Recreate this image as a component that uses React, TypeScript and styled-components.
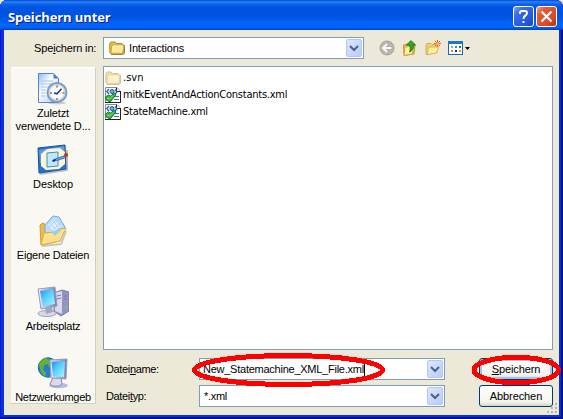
import React from 'react';
import styled, { createGlobalStyle } from 'styled-components';

const GlobalStyle = createGlobalStyle`
  * { box-sizing: border-box; }
  body { margin: 0; overflow: hidden; background: #ece9d8; }
  svg { display: block; flex: none; }
  u { text-underline-offset: 1px; text-decoration-thickness: 1px; text-decoration-skip-ink: none; }
`;

const Window = styled.div`
  position: relative;
  width: 563px;
  height: 419px;
  display: flex;
  flex-direction: column;
  overflow: hidden;
  border-radius: 7px 7px 0 0;
  background: #0831d9;
  box-shadow: inset 1px 0 #0019cf, inset -2px 0 #00138c, inset 0 -2px #00138c;
  font: 11px/13px "Liberation Sans", Arial, sans-serif;
  color: #000;
`;

const TitleBar = styled.header`
  height: 30px;
  flex: none;
  display: flex;
  align-items: center;
  gap: 2px;
  padding: 3px 6px 0 8px;
  border-radius: 7px 7px 0 0;
  background: linear-gradient(#0844c8 0, #2a82f8 6%, #0a67ee 13%, #0053e1 25%, #0054e3 55%, #0063fb 78%, #0066ff 88%, #0056e6 95%, #003cc4 100%);
`;

const Title = styled.h1`
  flex: 1;
  margin: 0;
  font: bold 13px/16px "Open Sans", "Noto Sans", sans-serif;
  letter-spacing: -0.1px;
  color: #fff;
  text-shadow: 1px 1px #0a1883;
`;

const CaptionButton = styled.button<{ $danger?: boolean }>`
  width: 21px;
  height: 21px;
  padding: 0;
  display: grid;
  place-items: center;
  border: 1px solid #fff;
  border-radius: 3px;
  background: ${p => p.$danger
    ? 'linear-gradient(135deg, #f0a08a 0, #e4583a 25%, #da4a25 70%, #b83010 100%)'
    : 'linear-gradient(135deg, #84a7f7 0, #3d6cec 25%, #2358de 70%, #1a48c4 100%)'};
`;

const Client = styled.main`
  flex: 1;
  min-height: 0;
  margin: 0 4px 4px;
  padding: 7px 6px 0 7px;
  background: #ece9d8;
  display: flex;
  flex-direction: column;
  gap: 7px;
`;

const Toolbar = styled.div`
  height: 22px;
  flex: none;
  display: flex;
  align-items: center;
`;

const LookInLabel = styled.label`
  width: 92px;
  padding-left: 23px;
  white-space: nowrap;
  letter-spacing: -0.15px;
`;

const Combo = styled.div<{ $width: number; $left?: number }>`
  width: ${p => p.$width}px;
  height: 22px;
  display: flex;
  align-items: center;
  gap: 4px;
  padding: 0 1px 0 ${p => p.$left ?? 4}px;
  border: 1px solid #7f9db9;
  background: #fff;
`;

const DropButton = styled.button`
  width: 16px;
  height: 18px;
  margin-left: auto;
  padding: 0;
  display: grid;
  place-items: center;
  border: 1px solid #b5c8f5;
  border-radius: 2px;
  background: linear-gradient(135deg, #dce6fe, #b9ccf8);
`;

const ToolIcons = styled.div`
  display: flex;
  align-items: center;
  gap: 7px;
  margin-left: 15px;
`;

const ViewsButton = styled.div`
  display: flex;
  align-items: center;
  gap: 1px;
`;

const Body = styled.div`
  flex: 1;
  min-height: 0;
  display: flex;
  gap: 7px;
`;

const Places = styled.nav`
  width: 85px;
  height: 337px;
  margin-top: 1px;
  padding-top: 5px;
  overflow: hidden;
  background: #f9f8f3;
  border-right: 1px solid #d3cfbf;
  border-bottom: 1px solid #d3cfbf;
  border-top: 1px solid #fff;
`;

const Place = styled.div`
  height: 71px;
  display: flex;
  flex-direction: column;
  align-items: center;
  gap: 2px;
  text-align: center;
  white-space: nowrap;
`;

const PlaceLabel = styled.span<{ $spacing: number }>`
  letter-spacing: ${p => p.$spacing}px;
`;

const Content = styled.section`
  width: 450px;
  display: flex;
  flex-direction: column;
`;

const FileList = styled.div`
  height: 284px;
  flex: none;
  padding: 2px 0 0 1px;
  border: 1px solid #7f9db9;
  background: #fff;
`;

const FileRow = styled.div<{ $spacing: number }>`
  height: 17px;
  display: flex;
  align-items: center;
  gap: 2px;
  font: 11px/13px "DejaVu Sans Condensed", "DejaVu Sans", sans-serif;
  letter-spacing: ${p => p.$spacing}px;
`;

const FormRows = styled.div`
  display: flex;
  flex-direction: column;
  gap: 5px;
  padding-top: 8px;
`;

const FormRow = styled.div`
  height: 22px;
  display: flex;
  align-items: center;
`;

const FieldLabel = styled.label`
  width: 96px;
  padding-left: 3px;
  letter-spacing: -0.35px;
`;

const FieldText = styled.span<{ $spacing?: number }>`
  letter-spacing: ${p => p.$spacing ?? 0}px;
  white-space: nowrap;
`;

const Caret = styled.i`
  width: 1px;
  height: 13px;
  margin-left: -4px;
  background: #000;
`;

const DialogButton = styled.button<{ $primary?: boolean }>`
  width: 74px;
  height: 22px;
  margin-left: 34px;
  padding: 0;
  border: 1px solid #003c74;
  border-radius: 3px;
  background: linear-gradient(#fff, #f4f3ee 80%, #d8d2c5);
  box-shadow: ${p => p.$primary ? 'inset 0 0 0 2px #a5c1f0' : 'none'};
  font: 11px/13px "Liberation Sans", Arial, sans-serif;
  letter-spacing: -0.1px;
  color: #000;
`;

const Marks = styled.svg`
  position: absolute;
  inset: 0;
  pointer-events: none;
`;

const Grip = styled.svg`
  position: absolute;
  right: 5px;
  bottom: 5px;
`;

const Chevron = () => (
  <svg width="10" height="7" viewBox="0 0 10 7"><path d="M1 1l4 4 4-4" fill="none" stroke="#4d6185" strokeWidth="2" /></svg>
);

const Folder = ({ pale }: { pale?: boolean }) => (
  <svg width="16" height="16" viewBox="0 0 16 16" opacity={pale ? 0.5 : 1}>
    <path d="M2 14.5h12l1.5-1V5" fill="none" stroke="#8d8368" />
    <path d="M.8 3.5L2 2h4l1.5 1.5H13L14.5 5v8L13 14H2.2L.8 12.5z" fill="#e7bd4f" stroke="#b88721" />
    <path d="M2.5 6.2L4 5h11l-1.2 8.3H2z" fill="#fee998" stroke="#d2a238" />
    <path d="M4 6.2h9" stroke="#fff9cf" />
  </svg>
);

const XmlFile = () => (
  <svg width="16" height="16" viewBox="0 0 16 16">
    <path d="M.5 .5h11L15.5 4v11.5H.5z" fill="#fff" stroke="#888" />
    <path d="M11.5 .5v4h4" fill="#eee" stroke="#222" />
    <path d="M4 2L1.8 4.5 4 7M10 2.5L12 5l-2 2" fill="none" stroke="#1667b5" strokeWidth="1.3" />
    <circle cx="7" cy="4.5" r="2" fill="#77a9e5" stroke="#1754a0" />
    <path d="M9 12.5h5M9 9.5h5" stroke="#56709c" />
    <path d="M.5 10l3-2 2 1 4-3 1.3 2-5.6 7-4-2z" fill="#40b33d" stroke="#15762b" />
    <path d="M2 11l2.5 1L8 8.5" fill="none" stroke="#97df77" />
    <path d="M0 15.5h15.5V4" fill="none" stroke="#222" />
  </svg>
);

const BackIcon = () => (
  <svg width="16" height="16" viewBox="0 0 16 16">
    <circle cx="8" cy="8" r="7" fill="#b6b5af" stroke="#a4a39c" />
    <path d="M12.5 8H4.5M8 4L4 8l4 4" fill="none" stroke="#f7f6ef" strokeWidth="2" />
  </svg>
);

const UpIcon = () => (
  <svg width="16" height="16" viewBox="0 0 16 16">
    <path d="M1.5 5l4-1 1 1h6.5l-1 9-10 1.5z" fill="#e8bd4e" stroke="#c29633" />
    <path d="M3 7l9-1-2 8-8 1.3z" fill="#fff0a1" stroke="#d1a941" />
    <path d="M4.5 5L9 .7 13.5 5h-2.3c.3 3-.7 5.5-3.6 7C8.5 9.8 8.3 8 8 5z" fill="#35ac28" stroke="#137a18" />
  </svg>
);

const NewFolderIcon = () => (
  <svg width="16" height="16" viewBox="0 0 16 16">
    <path d="M1 4.5l1-1h4l1 1h5v8L2 14.5H1z" fill="#f2d06f" stroke="#d4ae56" />
    <path d="M3.5 7h10l-2 6-9 1.5z" fill="#fff0a5" stroke="#dbb457" />
    <path d="M12.5 0v7M9 3.5h7M10 1l5 5M15 1l-5 5" stroke="#f15322" />
    <circle cx="12.5" cy="3.5" r="1.5" fill="#ffc15d" />
  </svg>
);

const ViewsIcon = () => (
  <svg width="15" height="14" viewBox="0 0 15 14" shapeRendering="crispEdges">
    <rect x=".5" y=".5" width="14" height="13" fill="#fff" stroke="#1767bd" />
    <path d="M0 1.5h15" stroke="#1b75d4" strokeWidth="3" />
    <path fill="#a69cc3" d="M3 5h2v2H3z" /><path fill="#3486d3" d="M7 5h2v2H7z" /><path fill="#168c20" d="M11 5h2v2h-2z" />
    <path fill="#df7655" d="M3 9h2v2H3z" /><path fill="#182d80" d="M7 9h2v2H7z" /><path fill="#c99d18" d="M11 9h2v2h-2z" />
  </svg>
);

const RecentIcon = () => (
  <svg width="32" height="32" viewBox="0 0 32 32">
    <defs><linearGradient id="page" x2="1" y2="1"><stop stopColor="#8bb8ff" /><stop offset=".4" stopColor="#fff" /><stop offset="1" stopColor="#9dc4f7" /></linearGradient></defs>
    <path d="M1.5 .5h15l5 5v24h-20z" fill="url(#page)" stroke="#5486cf" />
    <path d="M16.5 .5v5h5z" fill="#4184db" />
    <path d="M4 8h12M4 11h12M4 14h8M4 17h5M4 20h4M4 23h4" stroke="#a3c0ea" />
    <ellipse cx="20" cy="30" rx="9" ry="1.5" fill="#777" opacity=".35" />
    <circle cx="20" cy="19.5" r="9.5" fill="#c9dff2" stroke="#7d9fbe" strokeWidth="2" />
    <circle cx="20" cy="19.5" r="7.5" fill="#f4fbff" stroke="#c5dae9" />
    <path d="M17 20l3 .8 4.5-5" fill="none" stroke="#244265" strokeWidth="1.5" />
    <path d="M20 12.5v2M20 25v2M13 20h2M25.5 20h2" stroke="#ef792e" strokeWidth="2" />
  </svg>
);

const DesktopIcon = () => (
  <svg width="32" height="32" viewBox="0 0 32 32">
    <path d="M3 30L30 26V6" fill="none" stroke="#817f76" strokeWidth="2" opacity=".5" />
    <path d="M1 4L28 1l1 24-27 4z" fill="#2473d2" stroke="#194fa5" />
    <path d="M2 6l25-4 1 8L3 19z" fill="#579de9" />
    <path d="M4 10l6-5 13-1 5 4v12l-6 5-13 1-5-4z" fill="#fff4cc" />
    <path d="M10 9l11-1v14l-11 1z" fill="#c0e7ff" stroke="#378de0" />
    <path d="M17 15.5l11-4 1 2-9 3z" fill="#6ea9e7" stroke="#235ba3" strokeWidth=".8" />
    <path d="M15.5 17l3-1" stroke="#172b50" strokeWidth="2" />
    <circle cx="29" cy="11" r="2" fill="#c8321d" />
  </svg>
);

const DocumentsIcon = () => (
  <svg width="32" height="32" viewBox="0 0 32 32">
    <path d="M5 31l19-2 5-13" fill="none" stroke="#777" strokeWidth="2" opacity=".4" />
    <path d="M3 10l3-2 3 2 14 1v15L4 30z" fill="#edba4b" stroke="#d29d34" />
    <path d="M8 10L16 1l6 1 6 10-9 11-11-6z" fill="#b9ddff" stroke="#76a8dc" />
    <path d="M11 10l6-6 7 8-6 8z" fill="#eff8ff" opacity=".6" />
    <path d="M12 7l9 10M15 5l9 10M11 13l9-9M15 16l9-9" stroke="#9fcbf3" strokeWidth=".7" />
    <path d="M7 18l11-1 4-3 7-1-6 13-19 4z" fill="#ffe18b" stroke="#daad43" />
    <path d="M14 17l4-1 3-2 4 .5-7 6.5z" fill="#9cccf3" />
  </svg>
);

const ComputerIcon = ({ network }: { network?: boolean }) => (
  <svg width="32" height="32" viewBox="0 0 32 32">
    <defs>
      <linearGradient id="screen" x2="1" y2="1"><stop stopColor="#268af0" /><stop offset=".45" stopColor="#58cfff" /><stop offset="1" stopColor="#b0f6ff" /></linearGradient>
      <linearGradient id="case" x2="1"><stop stopColor="#eeeefa" /><stop offset="1" stopColor="#777baa" /></linearGradient>
    </defs>
    {network ? <g>
      <circle cx="11" cy="10.5" r="9.7" fill="#287bd1" stroke="#2061b1" />
      <path d="M3 5l5-4 5 2-2 4-4 1-1 5 3 3-1 4-4-5-2-7zM11 6l4-4 5 4-3 5-5-1z" fill="#61b62c" />
      <ellipse cx="21.5" cy="28.5" rx="9.5" ry="2.8" fill="#bbbdd8" />
      <path d="M16 21l8-1 1 7c-2 3-10 3-12 0z" fill="#d9daeb" stroke="#8587a9" />
      <path d="M13 3l17-1-1 20-15-1z" fill="url(#case)" stroke="#9a9bbd" />
      <path d="M14.5 4.8L28 4l-1 16-11-.7z" fill="url(#screen)" />
    </g> : <g>
      <path d="M17 7l8-3 7 2v19l-8 5-7-5z" fill="#9295bf" stroke="#7b7da8" />
      <path d="M18 7l7-2v23l-7-3z" fill="#d9daec" />
      <path d="M20 10l4-1M20 13l4-1M27 10h3M27 13h3" stroke="#777ba8" />
      <circle cx="29" cy="21" r="1" fill="#62df40" />
      <ellipse cx="10" cy="27.5" rx="9" ry="3" fill="#d7d8ea" stroke="#9d9fbd" />
      <path d="M8 21l7-1 1 6-7 2z" fill="#a3a5c5" />
      <path d="M1 3l17-2 2 19-16 3z" fill="url(#case)" stroke="#9a9bbd" />
      <path d="M3 5l13-2 2 15-12 2z" fill="url(#screen)" />
    </g>}
  </svg>
);

const places = [
  { icon: <RecentIcon />, label: <>Zuletzt<br />verwendete D...</>, spacing: -0.15 },
  { icon: <DesktopIcon />, label: 'Desktop', spacing: -0.05 },
  { icon: <DocumentsIcon />, label: 'Eigene Dateien', spacing: -0.2 },
  { icon: <ComputerIcon />, label: 'Arbeitsplatz', spacing: -0.25 },
  { icon: <ComputerIcon network />, label: 'Netzwerkumgeb', spacing: -0.3 },
];

const files = [
  { name: '.svn', icon: <Folder pale />, spacing: 0 },
  { name: 'mitkEventAndActionConstants.xml', icon: <XmlFile />, spacing: -0.24 },
  { name: 'StateMachine.xml', icon: <XmlFile />, spacing: -0.26 },
];

export default function App() {
  return (
    <>
      <GlobalStyle />
      <Window>
        <TitleBar>
          <Title>Speichern unter</Title>
          <CaptionButton aria-label="Hilfe">
            <svg width="15" height="15" viewBox="0 0 15 15" fill="none" stroke="#fff" strokeWidth="2"><path d="M4 5V3.5Q4 2 6 2h3q2 0 2 2 0 1.5-1.5 2.5Q7.5 7.6 7.5 10M7.5 12v2" /></svg>
          </CaptionButton>
          <CaptionButton $danger aria-label="Schließen">
            <svg width="15" height="15" viewBox="0 0 15 15"><path d="M2.5 2.5l10 10m0-10l-10 10" stroke="#fff" strokeWidth="2.2" /></svg>
          </CaptionButton>
        </TitleBar>
        <Client>
          <Toolbar>
            <LookInLabel>Spe<u>i</u>chern in:</LookInLabel>
            <Combo $width={261} $left={5}><Folder /><FieldText $spacing={-0.15}>Interactions</FieldText><DropButton><Chevron /></DropButton></Combo>
            <ToolIcons><BackIcon /><UpIcon /><NewFolderIcon />
              <ViewsButton><ViewsIcon /><svg width="7" height="5"><path d="M1 1h5L3.5 4z" /></svg></ViewsButton>
            </ToolIcons>
          </Toolbar>
          <Body>
            <Places>
              {places.map((p, i) => <Place key={i}>{p.icon}<PlaceLabel $spacing={p.spacing}>{p.label}</PlaceLabel></Place>)}
            </Places>
            <Content>
              <FileList>
                {files.map(f => <FileRow key={f.name} $spacing={f.spacing}>{f.icon}<span>{f.name}</span></FileRow>)}
              </FileList>
              <FormRows>
                <FormRow>
                  <FieldLabel>Datei<u>n</u>ame:</FieldLabel>
                  <Combo $width={246} $left={3}><FieldText $spacing={-0.25}>New_Statemachine_XML_File.xml</FieldText><Caret /><DropButton><Chevron /></DropButton></Combo>
                  <DialogButton $primary><u>S</u>peichern</DialogButton>
                </FormRow>
                <FormRow>
                  <FieldLabel>Datei<u>t</u>yp:</FieldLabel>
                  <Combo $width={246}><FieldText $spacing={-0.3}>*.xml</FieldText><DropButton><Chevron /></DropButton></Combo>
                  <DialogButton>Abbrechen</DialogButton>
                </FormRow>
              </FormRows>
            </Content>
          </Body>
        </Client>
        <Grip width="11" height="11" viewBox="0 0 11 11"><path d="M8 0h2v2H8zM4 4h2v2H4zM8 4h2v2H8zM0 8h2v2H0zM4 8h2v2H4zM8 8h2v2H8z" fill="#b8b4a2" /></Grip>
        <Marks width="563" height="419" fill="none" stroke="#f00" strokeWidth="5" shapeRendering="crispEdges">
          <ellipse cx="288.5" cy="370" rx="94" ry="14.5" />
          <ellipse cx="516.3" cy="370" rx="42.3" ry="12.7" />
        </Marks>
      </Window>
    </>
  );
}
